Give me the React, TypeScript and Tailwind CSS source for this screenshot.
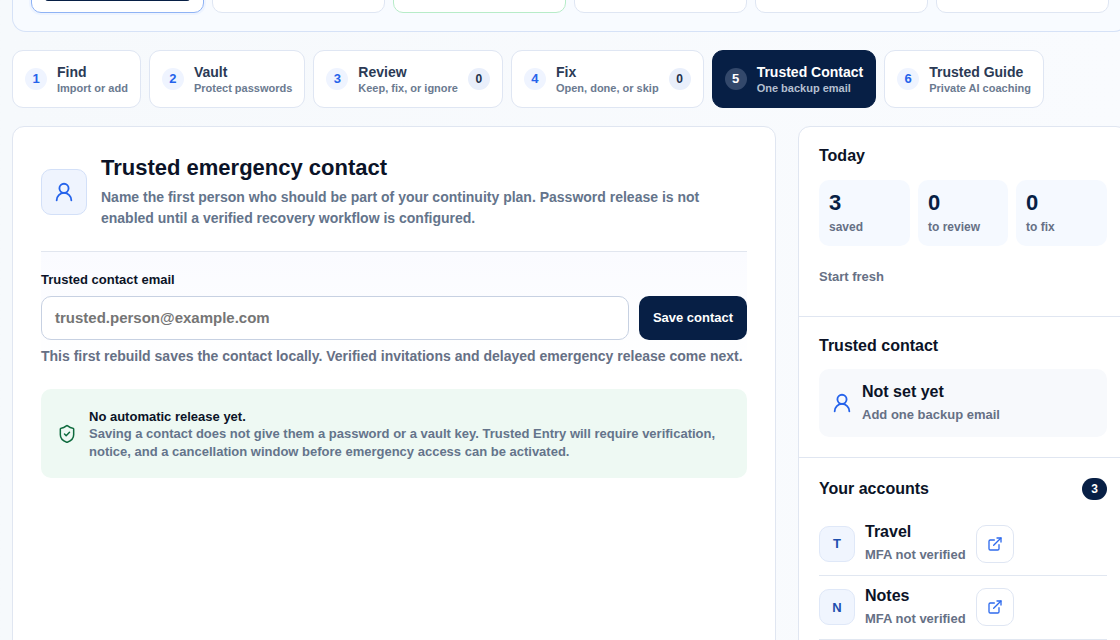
import { ExternalLink, ShieldCheck, UserRound } from "lucide-react";

const steps = [
  { n: "1", t: "Find", s: "Import or add" },
  { n: "2", t: "Vault", s: "Protect passwords" },
  { n: "3", t: "Review", s: "Keep, fix, or ignore", c: "0" },
  { n: "4", t: "Fix", s: "Open, done, or skip", c: "0" },
  { n: "5", t: "Trusted Contact", s: "One backup email", active: true },
  { n: "6", t: "Trusted Guide", s: "Private AI coaching" },
];

const topCards = [
  "border-[#8fb3f5] shadow-[0_0_0_2px_#eef4ff]",
  "border-[#dfe6f3]",
  "border-[#b7ecc8] bg-[#f1fdf5]",
  "border-[#dfe6f3]",
  "border-[#dfe6f3]",
  "border-[#dfe6f3]",
];

function Account({ l, t }: { l: string; t: string }) {
  return (
    <div className="flex h-[63.5px] items-center border-b border-[#e1e7f1]">
      <div className="flex h-9 w-9 shrink-0 items-center justify-center rounded-[10px] border border-[#dfe8f8] bg-[#f0f5fe] text-[13px] font-bold text-[#1d4fae]">
        {l}
      </div>
      <div className="ml-[10px] w-[111px]">
        <div className="text-base leading-[20px] font-bold text-[#0b1327]">{t}</div>
        <div className="mt-[3px] text-[13px] leading-[20px] font-bold text-[#667085]">MFA not verified</div>
      </div>
      <div className="flex h-[38px] w-[38px] items-center justify-center rounded-[10px] border border-[#dfe6f3] bg-white text-[#2f6bed]">
        <ExternalLink size={16} strokeWidth={2} />
      </div>
    </div>
  );
}

export default function App() {
  return (
    <div className="h-[640px] w-[1120px] overflow-hidden bg-gradient-to-r from-[#f6f9fc] to-[#f9fbfe] font-['Liberation_Sans',Arial,sans-serif]">
      <div className="w-[1128px] pl-3">
        <div className="-mt-[60px] flex h-[92px] gap-2 rounded-b-[14px] border border-t-0 border-[#d6e2f7] bg-[#f8fbff] px-[18px] pb-[19px]">
          {topCards.map((c, i) => (
            <div key={i} className={`relative h-[73px] flex-1 rounded-[10px] border bg-white ${c}`}>
              {i === 0 && (
                <div className="absolute right-[13px] bottom-[11px] left-[13px] h-[8px] rounded-[3px] bg-[#071f45]" />
              )}
            </div>
          ))}
        </div>

        <div className="mt-[18px] flex gap-2">
          {steps.map((s) => (
            <div
              key={s.n}
              className={`flex h-[58px] shrink-0 items-center rounded-[11px] border px-3 ${
                s.active ? "border-[#071f45] bg-[#071f45]" : "border-[#dfe6f3] bg-white"
              }`}
            >
              <div
                className={`flex h-[22px] w-[22px] shrink-0 items-center justify-center rounded-full text-[13px] font-bold ${
                  s.active ? "bg-[#33486b] text-white" : "bg-[#eff4ff] text-[#2563eb]"
                }`}
              >
                {s.n}
              </div>
              <div className="ml-[10px] min-w-0">
                <div className={`text-sm leading-[18px] font-bold ${s.active ? "text-white" : "text-[#2b3a55]"}`}>{s.t}</div>
                <div
                  className={`text-[11px] leading-[14px] font-bold whitespace-nowrap ${
                    s.active ? "text-[#b4bfd0]" : "text-[#6b7a90]"
                  }`}
                >
                  {s.s}
                </div>
              </div>
              {s.c && (
                <div className="ml-[10px] flex h-[22px] w-[22px] shrink-0 items-center justify-center rounded-full bg-[#e9effb] text-xs font-bold text-[#24324d]">
                  {s.c}
                </div>
              )}
            </div>
          ))}
        </div>

        <div className="mt-[18px] flex gap-[22px]">
          <main className="h-[540px] w-[764px] shrink-0 rounded-t-[12px] border border-[#e0e6f1] bg-white px-7 pt-[27px]">
            <div className="flex items-center gap-[14px] border-b border-[#e1e6ef] pb-[22px]">
              <div className="flex h-[46px] w-[46px] shrink-0 items-center justify-center rounded-[10px] border border-[#d3e0f8] bg-[#eff4fe] text-[#2563eb]">
                <UserRound size={22} strokeWidth={2} />
              </div>
              <div>
                <h1 className="text-[22px] leading-[28px] font-bold text-[#0b1327]">Trusted emergency contact</h1>
                <p className="mt-[5px] text-sm leading-[21px] font-bold text-[#64748b]">
                  Name the first person who should be part of your continuity plan. Password release is not
                  <br />
                  enabled until a verified recovery workflow is configured.
                </p>
              </div>
            </div>

            <div className="bg-gradient-to-b from-[#fafbff] to-white pt-[20px]">
              <div className="text-[13px] leading-[16px] font-bold text-[#0b1327]">Trusted contact email</div>
              <div className="mt-[8px] flex gap-[10px]">
                <div className="flex h-[44px] flex-1 items-center rounded-[10px] border border-[#c7d1e2] bg-white px-[13px] text-[15px] font-bold text-[#757575]">
                  trusted.person@example.com
                </div>
                <div className="flex h-[44px] w-[108px] items-center justify-center rounded-[10px] bg-[#071f45] text-[13px] font-bold text-white">
                  Save contact
                </div>
              </div>
              <p className="mt-[6px] pb-[6px] text-sm leading-[20px] font-bold text-[#667085]">
                This first rebuild saves the contact locally. Verified invitations and delayed emergency release come next.
              </p>
            </div>

            <div className="mt-[17px] flex h-[89px] items-center rounded-[10px] bg-[#eef9f3] pl-4">
              <ShieldCheck size={20} strokeWidth={1.8} className="shrink-0 text-[#0f6b3e]" />
              <div className="ml-3 pt-[2px] text-[13px] leading-[18px] font-bold">
                <div className="leading-[17px] text-[#0b1327]">No automatic release yet.</div>
                <div className="text-[#64748b]">
                  Saving a contact does not give them a password or a vault key. Trusted Entry will require verification,
                  <br />
                  notice, and a cancellation window before emergency access can be activated.
                </div>
              </div>
            </div>
          </main>

          <aside className="h-[540px] w-[330px] shrink-0 rounded-t-[12px] border border-[#e0e6f1] bg-white">
            <section className="h-[190px] border-b border-[#e0e6f1] px-5 pt-[19px]">
              <h2 className="text-base leading-[20px] font-bold text-[#0b1327]">Today</h2>
              <div className="mt-[14px] flex gap-2">
                {[
                  ["3", "saved", "w-[91px]"],
                  ["0", "to review", "w-[90px]"],
                  ["0", "to fix", "w-[91px]"],
                ].map(([v, l, w]) => (
                  <div key={l} className={`h-[66px] rounded-[10px] bg-[#f5f9ff] px-[10px] pt-[10px] ${w}`}>
                    <div className="text-[22px] leading-[26px] font-bold text-[#071f45]">{v}</div>
                    <div className="mt-[2px] text-xs leading-[18px] font-bold text-[#667085]">{l}</div>
                  </div>
                ))}
              </div>
              <div className="mt-[22px] text-[13px] leading-[18px] font-bold text-[#667085]">Start fresh</div>
            </section>

            <section className="h-[141px] border-b border-[#e0e6f1] px-5 pt-[19px]">
              <h2 className="text-base leading-[20px] font-bold text-[#0b1327]">Trusted contact</h2>
              <div className="mt-[13px] flex h-[68px] items-center rounded-[10px] bg-[#f7f9fc] pl-3">
                <UserRound size={22} strokeWidth={2} className="shrink-0 text-[#2563eb]" />
                <div className="ml-[9px]">
                  <div className="text-base leading-[20px] font-bold text-[#0b1327]">Not set yet</div>
                  <div className="mt-[3px] text-[13px] leading-[20px] font-bold text-[#667085]">Add one backup email</div>
                </div>
              </div>
            </section>

            <section className="px-5 pt-[20px]">
              <div className="flex h-[22px] items-center justify-between">
                <h2 className="text-base leading-[20px] font-bold text-[#0b1327]">Your accounts</h2>
                <div className="flex h-[22px] w-[25px] items-center justify-center rounded-full bg-[#071f45] text-xs font-bold text-white">
                  3
                </div>
              </div>
              <div className="mt-[12.5px]">
                <Account l="T" t="Travel" />
                <Account l="N" t="Notes" />
              </div>
            </section>
          </aside>
        </div>
      </div>
    </div>
  );
}
